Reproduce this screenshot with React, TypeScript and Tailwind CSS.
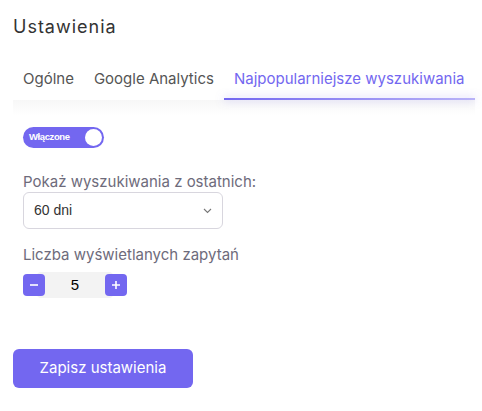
import { useState } from "react";

const tabs = ["Ogólne", "Google Analytics", "Najpopularniejsze wyszukiwania"];

export default function App() {
  const [active, setActive] = useState(2);
  const [enabled, setEnabled] = useState(true);
  const [count, setCount] = useState(5);

  return (
    <div className="min-h-[411px] w-[482px] bg-white font-['Inter',sans-serif] text-[#5e5873]">
      <div className="px-[13px] pt-[15px]">
        <h1 className="text-[18px] leading-6 font-normal tracking-[1px] text-[#333]">Ustawienia</h1>

        <div className="mt-[30px]">
          <nav className="flex">
            {tabs.map((t, i) => (
              <button
                key={t}
                type="button"
                onClick={() => setActive(i)}
                className={
                  "relative shrink-0 whitespace-nowrap px-[10px] pb-[11px] text-[15px] leading-5 " +
                  (i === active ? "text-[#7367f0]" : "text-[#555]")
                }
              >
                {t}
                {i === active && (
                  <span className="absolute bottom-0 left-0 right-0 h-[2px] bg-[linear-gradient(90deg,#7367f0,rgba(115,103,240,0.5))] shadow-[0_0_8px_0_rgba(115,103,240,0.5)]" />
                )}
              </button>
            ))}
          </nav>
          <div className="h-[16px] w-[462px] bg-[linear-gradient(180deg,#f7f7f7,rgba(255,255,255,0))]" />
        </div>

        <div className="px-[10px] pt-[11px]">
          <button
            type="button"
            onClick={() => setEnabled(!enabled)}
            className="flex h-[21px] w-[81px] items-center justify-between rounded-full bg-[#7367f0] pl-[6px] pr-[2px]"
          >
            <span className="font-['Liberation_Sans',sans-serif] text-[9.5px] font-bold tracking-[-0.4px] text-white">
              {enabled ? "Włączone" : "Wyłączone"}
            </span>
            <span className="h-[17px] w-[17px] rounded-full bg-white" />
          </button>

          <label className="mt-[24px] block text-[15px] leading-5 text-[#6e6b7b]">
            Pokaż wyszukiwania z ostatnich:
          </label>
          <div className="relative flex h-[37px] w-[200px] items-center rounded-md border border-[#d8d6de] pl-[10px] font-['Liberation_Sans',sans-serif] text-[14px] text-[#333]">
            60 dni
            <svg className="absolute right-[10px] top-[15px]" width="9" height="6" viewBox="0 0 9 6" fill="none">
              <path d="M1 1l3.5 3.5L8 1" stroke="#777" strokeWidth="1.1" />
            </svg>
          </div>

          <label className="mt-[16px] block text-[15px] leading-5 text-[#6e6b7b]">
            Liczba wyświetlanych zapytań
          </label>
          <div className="mt-[7px] flex items-center">
            <button
              type="button"
              onClick={() => setCount(Math.max(1, count - 1))}
              className="relative z-10 flex h-[22px] w-[22px] items-center justify-center rounded-[4px] bg-[#7367f0]"
            >
              <svg width="10" height="10" viewBox="0 0 10 10">
                <path d="M1 5h8" stroke="#fff" strokeWidth="1.6" />
              </svg>
            </button>
            <span className="-mx-[8px] flex h-[26px] w-[76px] items-center justify-center rounded-[4px] bg-[#f3f3f3] font-['Liberation_Sans',sans-serif] text-[15px] text-black">
              {count}
            </span>
            <button
              type="button"
              onClick={() => setCount(count + 1)}
              className="relative z-10 flex h-[22px] w-[22px] items-center justify-center rounded-[4px] bg-[#7367f0]"
            >
              <svg width="10" height="10" viewBox="0 0 10 10">
                <path d="M1 5h8M5 1v8" stroke="#fff" strokeWidth="1.6" />
              </svg>
            </button>
          </div>
        </div>

        <button
          type="button"
          className="mt-[51px] h-[39px] w-[180px] rounded-md bg-[#7367f0] text-[15px] text-white"
        >
          Zapisz ustawienia
        </button>
      </div>
    </div>
  );
}
